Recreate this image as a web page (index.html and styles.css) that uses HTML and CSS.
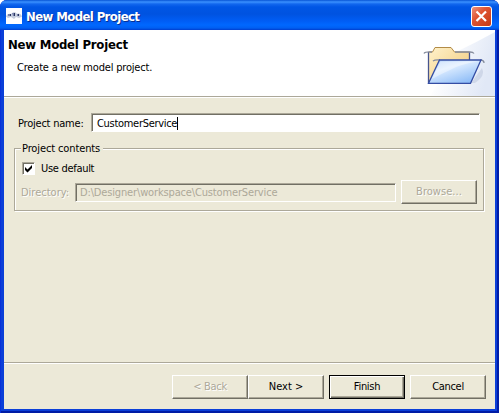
FILE: index.html
```html
<!DOCTYPE html>
<html lang="en">
<head>
<meta charset="utf-8">
<title>New Model Project</title>
<link rel="stylesheet" href="styles.css">
</head>
<body>
<div class="window">
  <header class="titlebar">
    <svg class="app-icon" width="16" height="16" viewBox="0 0 16 16">
      <rect width="16" height="16" fill="#fdfdff"/>
      <path d="M0 8.500C1 6 3 5.500 5 6C7 3.500 10 4 11 6C13 5 15 6 16 8.500L13 10L10 9L8 11L5 9L2 10Z" fill="#c3cbdc"/>
      <path d="M2 6h2v2H2zM6 5h3v3H7zM11 6h2v2h-2z" fill="#7882ac"/>
      <path d="M4 6h1v2H4zM8 5h1v3H8zM12 6h1v2h-1z" fill="#29345f"/>
    </svg>
    <span class="caption">New Model Project</span>
    <button class="close" aria-label="Close"><svg width="21" height="21" viewBox="0 0 21 21"><path d="M5.500 5.500L15 15M15 5.500L5.500 15" stroke="#fff" stroke-width="2.200"/></svg></button>
  </header>
  <main class="client">
    <section class="banner">
      <div class="intro">
        <h1>New Model Project</h1>
        <p>Create a new model project.</p>
      </div>
      <svg class="art" width="75" height="66" viewBox="420 30 75 66">
        <defs>
          <linearGradient id="haze" x1="0" y1="0" x2="1" y2="0.300"><stop offset="0.250" stop-color="#fff"/><stop offset="1" stop-color="#e1e8f6"/></linearGradient>
          <linearGradient id="back" x1="0" y1="0" x2="1" y2="1"><stop offset="0" stop-color="#fff2cc"/><stop offset="1" stop-color="#efc673"/></linearGradient>
          <linearGradient id="front" x1="0" y1="0" x2="0.700" y2="1"><stop offset="0" stop-color="#a8cbf8"/><stop offset="0.400" stop-color="#dcecff"/><stop offset="1" stop-color="#8dbcf7"/></linearGradient>
        </defs>
        <path d="M495 32Q477 42 458 51L430 96H495Z" fill="url(#haze)"/>
        <path d="M471 83L482 68Q486 76 475 83Z" fill="#9caac8" opacity="0.300"/>
        <path d="M428.500 83V52H432.500L435 47.500H451L454.500 52H469.500V83Z" fill="url(#back)" stroke="#b28b47"/>
        <path d="M428.500 83V52M469.500 52V60" stroke="#47548e" stroke-width="1.300"/>
        <path d="M424 53.500Q425 51.500 432 52M455 52H470Q473 52 474 53.500M433 61Q435 59.500 440 60M480 60Q484 60 484 63" stroke="#848b9b" stroke-width="1.300" fill="none"/>
        <path d="M428.500 83.300L439.500 60H481L470.500 83.300Z" fill="url(#front)" stroke="#344da4" stroke-width="1.300"/>
        <path d="M432 79L440.500 61.500H478Q460 64 450 70Q441 74 432 79Z" fill="#fff" opacity="0.400"/>
      </svg>
    </section>
    <section class="page">
      <div class="name-row"><label class="t-name">Project name:</label><div class="field name-field"><span class="t-value">CustomerService</span><i class="caret"></i></div></div>
      <fieldset class="group">
        <legend><span class="t-legend">Project contents</span></legend>
        <div class="check-row">
          <span class="check"><svg width="9" height="9" viewBox="0 0 9 9"><path d="M1 3L3.500 5.500L8 1V4L3.500 8.500L1 6Z" fill="#000"/></svg></span>
          <span class="t-default">Use default</span>
        </div>
        <div class="dir-row">
          <span class="t-dir disabled">Directory:</span>
          <div class="field dir-field"><span class="t-path">D:\Designer\workspace\CustomerService</span></div>
          <button class="btn disabled" disabled><span class="t-browse">Browse...</span></button>
        </div>
      </fieldset>
    </section>
    <footer class="actions">
      <button class="btn disabled" disabled><span class="t-back">&lt; Back</span></button>
      <button class="btn"><span class="t-next">Next &gt;</span></button>
      <button class="btn primary"><span class="t-finish">Finish</span></button>
      <button class="btn cancel"><span class="t-cancel">Cancel</span></button>
    </footer>
  </main>
</div>
</body>
</html>
```
FILE: styles.css
```css
* { box-sizing: border-box; }
body { margin: 0; background: #fff; color: #000; font: 11px/14px "DejaVu Sans Condensed", "DejaVu Sans", sans-serif; letter-spacing: -0.3px; }
.window { width: 499px; height: 413px; display: flex; flex-direction: column; padding: 0 4px 4px; border-radius: 7px 7px 0 0; overflow: hidden; background: #0b3fd8; box-shadow: inset 1px 0 #0831d9, inset -2px 0 #001ca5, inset 0 -2px #001ca5; }
.titlebar { flex: none; height: 30px; margin: 0 -4px; padding: 2px 7px 0 6px; display: flex; align-items: center; background: linear-gradient(#0754d5 0, #3b91ff 2px, #1267ee 4px, #0056e5 7px, #0053e0 14px, #005df5 21px, #0068ff 25px, #005ff2 28px, #003dce 30px); }
.app-icon { display: block; flex: none; }
.caption { margin: 2px 0 0 4px; flex: 1; color: #fff; font: bold 13px/18px "DejaVu Sans Condensed", sans-serif; letter-spacing: -0.6px; white-space: nowrap; text-shadow: 1px 1px #0a2f91; }
.close { width: 21px; height: 21px; padding: 0; border: 1px solid #fff; border-radius: 3px; background: linear-gradient(135deg, #ee927c, #df5432 40%, #c53a16); display: flex; align-items: center; justify-content: center; }
.close svg { flex: none; }
.client { flex: 1; display: flex; flex-direction: column; background: #ece9d8; }
.banner { height: 68px; display: flex; justify-content: space-between; background: #fff; border-bottom: 1px solid #fff; box-shadow: inset 0 -1px #aca899; }
.intro { padding-top: 7px; }
h1 { margin: 0 0 0 4px; font: bold 13px/15px "DejaVu Sans Condensed", sans-serif; letter-spacing: -0.22px; }
p { margin: 9px 0 0 13px; letter-spacing: -0.19px; }
.art { display: block; }
.page { flex: 1; padding: 15px 10px 0; }
.name-row { display: flex; align-items: center; height: 19px; padding: 0 5px 0 4px; }
.name-row label { width: 73px; padding-top: 2px; white-space: nowrap; letter-spacing: -0.22px; }
.field { display: flex; align-items: center; height: 19px; padding: 1px 0 0 4px; border: 1px solid; border-color: #aca899 #fff #fff #aca899; box-shadow: inset 1px 1px #716f64; white-space: nowrap; }
.name-field { flex: 1; padding-left: 5px; background: #fff; }
.t-value { padding-top: 1px; }
.caret { width: 1px; height: 13px; background: #000; }
.group { position: relative; display: flex; flex-direction: column; min-width: 0; height: 70px; margin: 10px 0 0; padding: 5px 6px 0 7px; border: 0; }
.group::before { content: ""; position: absolute; inset: -8px 1px 1px 0; border: 1px solid #aca899; box-shadow: 1px 1px #fff, inset 1px 1px #fff; }
legend { position: relative; z-index: 1; padding: 0 3px 0 1px; background: #ece9d8; height: 14px; }
.t-legend { letter-spacing: -0.12px; }
.check-row { display: flex; align-items: center; gap: 6px; height: 14px; position: relative; }
.t-default { padding-top: 1px; }
.check { width: 13px; height: 13px; margin-left: 1px; display: flex; align-items: center; justify-content: center; background: #fff; border: 1px solid; border-color: #aca899 #fff #fff #aca899; box-shadow: inset 1px 1px #716f64; }
.check svg { flex: none; }
.dir-row { position: relative; display: flex; align-items: center; height: 24px; margin-top: 5px; }
.t-dir { width: 54px; padding-top: 2px; letter-spacing: 0; }
.dir-field { width: 321px; margin-right: 5px; color: #aca899; }
.t-path { padding-top: 1px; letter-spacing: -0.15px; }
.t-browse { letter-spacing: 0.05px; }
.t-next { letter-spacing: 0; }
.disabled { color: #aca899; text-shadow: 1px 1px #fff; }
.btn { flex: none; width: 76px; height: 24px; padding: 0; font: inherit; letter-spacing: inherit; color: #000; background: #ece9d8; border: 1px solid; border-color: #fff #716f64 #716f64 #fff; box-shadow: inset -1px -1px #aca899; display: flex; align-items: center; justify-content: center; }
.btn.disabled { color: #aca899; }
.actions { height: 47px; display: flex; align-items: flex-start; justify-content: flex-end; padding: 12px 9px 0 0; border-top: 1px solid #aca899; box-shadow: inset 0 1px #fff; }
.primary { margin: 0 5px; border-color: #000; box-shadow: inset 1px 1px #fff, inset -1px -1px #716f64, inset -2px -2px #aca899; }
```
